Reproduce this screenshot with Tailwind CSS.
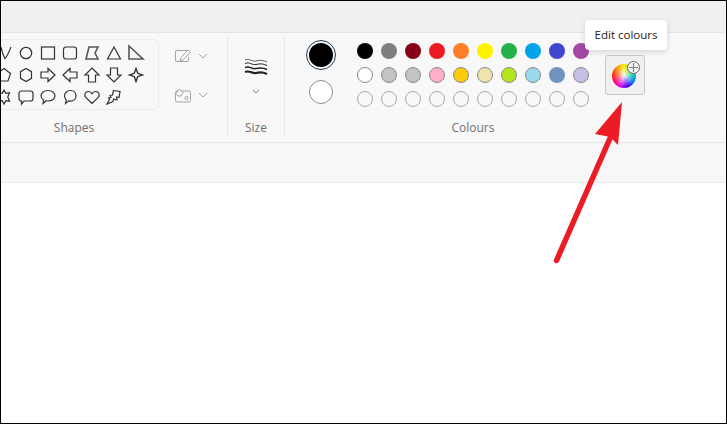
<!DOCTYPE html>
<html lang="en">
<head>
    <meta charset="UTF-8">
    <meta name="viewport" content="width=device-width, initial-scale=1.0">
    <title>Paint - Edit colours</title>
    <script src="https://cdn.jsdelivr.net/npm/@tailwindcss/browser@4"></script>
</head>
<body class="bg-white">

    <div class="relative w-[727px] h-[424px] overflow-hidden flex flex-col bg-white border-y border-x border-black [font-family:'Open_Sans',sans-serif]">

        <!-- title bar -->
        <div class="h-[31px] shrink-0 bg-[#f0f0f0]"></div>

        <!-- ribbon -->
        <div class="h-[111px] shrink-0 flex pt-[3px] bg-[#f8f8f8] border-y border-[#e5e5e5]">

            <!-- shapes -->
            <div class="h-[101px] -ml-[12px] shrink-0 flex flex-col pt-[3px]">
                <div class="w-[170px] h-[71px] pt-[2px] pl-[3px] border border-[#ebebeb] rounded-md">
                    <div class="grid grid-cols-[repeat(7,22px)] auto-rows-[22px] text-[#333]">
                        <svg viewBox="0 0 22 22" fill="none" stroke="currentColor" stroke-width="1.2"><path d="M8 5c1 5 2 8 4 11.500C14.500 14 16 10 18 5"/></svg>
                        <svg viewBox="0 0 22 22" fill="none" stroke="currentColor" stroke-width="1.2"><circle cx="11" cy="11" r="5.700"/></svg>
                        <svg viewBox="0 0 22 22" fill="none" stroke="currentColor" stroke-width="1.2"><rect x="4.500" y="5" width="13" height="12"/></svg>
                        <svg viewBox="0 0 22 22" fill="none" stroke="currentColor" stroke-width="1.2"><rect x="4.500" y="5" width="13" height="12" rx="2.500"/></svg>
                        <svg viewBox="0 0 22 22" fill="none" stroke="#555" stroke-width="1.600"><path d="M8 5h9l-3 6 3 6H5z"/></svg>
                        <svg viewBox="0 0 22 22" fill="none" stroke="currentColor" stroke-width="1.2"><path d="M11 5l6.500 12h-13z"/></svg>
                        <svg viewBox="0 0 22 22" fill="none" stroke="#555" stroke-width="1.600"><path d="M4 4v13h14z"/></svg>

                        <svg viewBox="0 0 22 22" fill="none" stroke="currentColor" stroke-width="1.2"><path d="M11 4.500l6.500 5-2.500 7.500H7L4.500 9.500z"/></svg>
                        <svg viewBox="0 0 22 22" fill="none" stroke="currentColor" stroke-width="1.2"><path d="M11 4.500l5.500 3.200v6.600L11 17.500l-5.500-3.200V7.700z"/></svg>
                        <svg viewBox="0 0 22 22" fill="none" stroke="currentColor" stroke-width="1.2"><path d="M4 8h7V4.500l7 6.500-7 6.500V14H4z"/></svg>
                        <svg viewBox="0 0 22 22" fill="none" stroke="currentColor" stroke-width="1.2"><path d="M18 8h-7V4.500L4 11l7 6.500V14h7z"/></svg>
                        <svg viewBox="0 0 22 22" fill="none" stroke="currentColor" stroke-width="1.2"><path d="M11 4l7 7h-3.500v7h-7v-7H4z"/></svg>
                        <svg viewBox="0 0 22 22" fill="none" stroke="currentColor" stroke-width="1.2"><path d="M7.500 4h7v7H18l-7 7-7-7h3.500z"/></svg>
                        <svg viewBox="0 0 22 22" fill="none" stroke="currentColor" stroke-width="1.400"><path d="M11 4.500l1.700 4.800 4.800 1.700-4.800 1.700L11 17.500l-1.700-4.800L4.500 11l4.800-1.700z"/></svg>

                        <svg viewBox="0 0 22 22" fill="none" stroke="currentColor" stroke-width="1.2"><path d="M11 4l1.800 3.400 3.700-.6-1.700 4.200 1.700 4.200-3.700-.6L11 18l-1.800-3.400-3.700.6L7.200 11 5.500 6.800l3.700.6z"/></svg>
                        <svg viewBox="0 0 22 22" fill="none" stroke="currentColor" stroke-width="1.2"><path d="M6.500 5h9A2.500 2.500 0 0 1 18 7.500v5a2.500 2.500 0 0 1-2.500 2.500H9l-2.500 3v-3A2.500 2.500 0 0 1 4 12.500v-5A2.500 2.500 0 0 1 6.500 5z"/></svg>
                        <svg viewBox="0 0 22 22" fill="none" stroke="currentColor" stroke-width="1.2"><path d="M11 4.500c4 0 7 2.300 7 5.200s-3 5.300-7 5.300c-.6 0-1.200 0-1.800-.2L6 17.500l.6-3.600C5 13 4 11.500 4 9.700c0-2.900 3-5.200 7-5.200z"/></svg>
                        <svg viewBox="0 0 22 22" fill="none" stroke="currentColor" stroke-width="1.2"><path d="M11.500 4.500c3.200 0 5.500 2.300 5.500 5.300s-2.300 5.400-5.500 5.400c-.7 0-1.300-.1-1.800-.3L6.500 17.500l.8-3.600C6 12.900 5.500 11.400 5.500 9.800c0-3 2.800-5.300 6-5.300z"/></svg>
                        <svg viewBox="0 0 22 22" fill="none" stroke="currentColor" stroke-width="1.2"><path d="M11 17.500L4.800 11.300C2.800 9.200 4 5.500 7.300 5.500c1.700 0 3 .8 3.700 2.200.7-1.400 2-2.200 3.700-2.200 3.300 0 4.500 3.700 2.500 5.800z"/></svg>
                        <svg viewBox="0 0 22 22" fill="none" stroke="currentColor" stroke-width="1.2"><path d="M10.500 4.500l6.500 1-1 6-2.500-.5.500 3-3.500-1-.5 2.500L4 18l2.500-4.500L5.500 12l2.500-.5L7 9.500l2.500-.5z"/></svg>
                    </div>
                </div>
                <div class="h-[18px] mt-auto flex items-center justify-center text-xs text-[#707070]">Shapes</div>
            </div>

            <!-- outline and fill -->
            <div class="h-[101px] w-[69px] shrink-0 pl-[15px] pt-[12px] border-r border-[#e9e9e9] flex flex-col gap-[23px] text-[#a3a3a3]">
                <div class="flex items-center gap-[6px]">
                    <svg class="w-[18px] h-[16px]" viewBox="0 0 18 16" fill="none" stroke="currentColor" stroke-width="1"><path d="M13 2.500H3a1.500 1.500 0 0 0-1.500 1.500v8A1.500 1.500 0 0 0 3 13.500h10a1.500 1.500 0 0 0 1.500-1.500V9"/><path d="M6 13l1-3.500L14 2l2.500 2-7 7.500z"/></svg>
                    <svg class="w-[10px] h-[6px]" viewBox="0 0 10 6" fill="none" stroke="currentColor" stroke-width="1"><path d="M1 1l4 4 4-4"/></svg>
                </div>
                <div class="flex items-center gap-[6px]">
                    <svg class="w-[18px] h-[16px]" viewBox="0 0 18 16" fill="none" stroke="currentColor" stroke-width="1"><rect x="1.500" y="4" width="15" height="11" rx="1.500"/><path d="M2 6.500L5.500 2l3.500 3.500-2 3.500H4z" fill="#f8f8f8"/><circle cx="12.500" cy="11" r="1.500"/></svg>
                    <svg class="w-[10px] h-[6px]" viewBox="0 0 10 6" fill="none" stroke="currentColor" stroke-width="1"><path d="M1 1l4 4 4-4"/></svg>
                </div>
            </div>

            <!-- size -->
            <div class="h-[101px] w-[57px] shrink-0 border-r border-[#e9e9e9] flex flex-col items-center">
                <svg class="w-[24px] h-[18px] mt-[22px]" viewBox="0 0 24 18" fill="none" stroke="#222">
                    <path stroke-width="0.7" d="M1 2c5-2 7 2 11 1s7-1 11 1"/>
                    <path stroke-width="1" d="M1 5.500c5-2 7 2 11 1s7-1 11 1"/>
                    <path stroke-width="1.500" d="M1 9.500c5-2 7 2 11 1s7-1 11 1"/>
                    <path stroke-width="2.200" d="M1 14c5-2 7 2 11 1s7-1 11 1"/>
                </svg>
                <svg class="w-[8px] h-[5px] mt-[13px] text-[#777]" viewBox="0 0 10 6" fill="none" stroke="currentColor" stroke-width="1.2"><path d="M1 1l4 4 4-4"/></svg>
                <div class="h-[18px] mt-auto flex items-center justify-center text-xs text-[#707070]">Size</div>
            </div>

            <!-- colours -->
            <div class="h-[101px] w-[376px] shrink-0 flex flex-col">
                <div class="flex pl-[21px]">
                    <div class="w-[30px] shrink-0 flex flex-col items-center gap-[10px] pt-[4px]">
                        <div class="w-[30px] h-[30px] rounded-full border border-[#1f3a52] flex items-center justify-center">
                            <div class="w-[24px] h-[24px] rounded-full bg-black"></div>
                        </div>
                        <div class="w-[24px] h-[24px] rounded-full bg-white border border-[#8f8f8f]"></div>
                    </div>
                    <div class="ml-[17px] pt-[3px] grid grid-cols-[repeat(10,24px)] auto-rows-[24px] place-items-center">
                        <div class="w-[16px] h-[16px] rounded-full bg-[#000000]"></div>
                        <div class="w-[16px] h-[16px] rounded-full bg-[#7f7f7f]"></div>
                        <div class="w-[16px] h-[16px] rounded-full bg-[#880015]"></div>
                        <div class="w-[16px] h-[16px] rounded-full bg-[#ed1c24]"></div>
                        <div class="w-[16px] h-[16px] rounded-full bg-[#ff7f27]"></div>
                        <div class="w-[16px] h-[16px] rounded-full bg-[#fff200]"></div>
                        <div class="w-[16px] h-[16px] rounded-full bg-[#22b14c]"></div>
                        <div class="w-[16px] h-[16px] rounded-full bg-[#00a2e8]"></div>
                        <div class="w-[16px] h-[16px] rounded-full bg-[#3f48cc]"></div>
                        <div class="w-[16px] h-[16px] rounded-full bg-[#a349a4]"></div>

                        <div class="w-[16px] h-[16px] rounded-full border border-[#8a8a8a] bg-[#ffffff]"></div>
                        <div class="w-[16px] h-[16px] rounded-full border border-[#8a8a8a] bg-[#c3c3c3]"></div>
                        <div class="w-[16px] h-[16px] rounded-full border border-[#8a8a8a] bg-[#c3c3c3]"></div>
                        <div class="w-[16px] h-[16px] rounded-full border border-[#8a8a8a] bg-[#ffaec9]"></div>
                        <div class="w-[16px] h-[16px] rounded-full border border-[#8a8a8a] bg-[#ffc90e]"></div>
                        <div class="w-[16px] h-[16px] rounded-full border border-[#8a8a8a] bg-[#efe4b0]"></div>
                        <div class="w-[16px] h-[16px] rounded-full border border-[#8a8a8a] bg-[#b5e61d]"></div>
                        <div class="w-[16px] h-[16px] rounded-full border border-[#8a8a8a] bg-[#99d9ea]"></div>
                        <div class="w-[16px] h-[16px] rounded-full bg-[#7092be]"></div>
                        <div class="w-[16px] h-[16px] rounded-full border border-[#8a8a8a] bg-[#c8bfe7]"></div>

                        <div class="w-[16px] h-[16px] rounded-full border border-[#aaaaaa]"></div>
                        <div class="w-[16px] h-[16px] rounded-full border border-[#aaaaaa]"></div>
                        <div class="w-[16px] h-[16px] rounded-full border border-[#aaaaaa]"></div>
                        <div class="w-[16px] h-[16px] rounded-full border border-[#aaaaaa]"></div>
                        <div class="w-[16px] h-[16px] rounded-full border border-[#aaaaaa]"></div>
                        <div class="w-[16px] h-[16px] rounded-full border border-[#aaaaaa]"></div>
                        <div class="w-[16px] h-[16px] rounded-full border border-[#aaaaaa]"></div>
                        <div class="w-[16px] h-[16px] rounded-full border border-[#aaaaaa]"></div>
                        <div class="w-[16px] h-[16px] rounded-full border border-[#aaaaaa]"></div>
                        <div class="w-[16px] h-[16px] rounded-full border border-[#aaaaaa]"></div>
                    </div>
                    <!-- edit colours button -->
                    <div class="relative ml-[12px] mt-[19px] w-[40px] h-[40px] shrink-0 rounded-[3px] bg-[#f0f0f0] border border-[#c8c8c8]">
                        <div class="absolute left-[6px] top-[8px] w-[24px] h-[24px] rounded-full bg-[conic-gradient(#ffee00,#7cdc10,#00c8a0,#0080f0,#3a00f0,#e000f0,#ff0060,#ff3000,#ff9000,#ffee00)]">
                            <div class="w-full h-full rounded-full bg-[radial-gradient(circle,#ffffffee_0%,#ffffff66_35%,#ffffff00_65%)]"></div>
                        </div>
                        <div class="absolute left-[21px] top-[5px] w-[13px] h-[13px] rounded-full bg-[#f4f4f4] border border-[#666] flex items-center justify-center">
                            <svg class="w-[9px] h-[9px]" viewBox="0 0 9 9" stroke="#888" stroke-width="1.200"><path d="M4.500 0v9M0 4.500h9"/></svg>
                        </div>
                    </div>
                </div>
                <div class="h-[18px] mt-auto flex items-center justify-center text-xs text-[#707070]">Colours</div>
            </div>
        </div>

        <!-- strip under the ribbon -->
        <div class="h-[40px] shrink-0 bg-[#f7f7f7] border-b border-[#e9e9e9]"></div>

        <!-- canvas -->
        <div class="flex-1 bg-white"></div>

        <!-- tooltip -->
        <div class="absolute left-[584px] top-[19px] w-[82px] h-[30px] rounded-[4px] bg-white shadow-[0_2px_6px_rgba(0,0,0,0.14)] flex items-center justify-center text-[11.500px] text-[#222]">Edit colours</div>

        <!-- annotation arrow -->
        <svg class="absolute left-0 top-0 w-[725px] h-[422px] pointer-events-none" viewBox="1 1 725 422" fill="#ed1c24">
            <path d="M556.500 260.500L611 136" stroke="#ed1c24" stroke-width="5.500" stroke-linecap="round" fill="none"/>
            <path d="M622 102L595 134 610 137 618 145z"/>
        </svg>
    </div>

</body>
</html>
